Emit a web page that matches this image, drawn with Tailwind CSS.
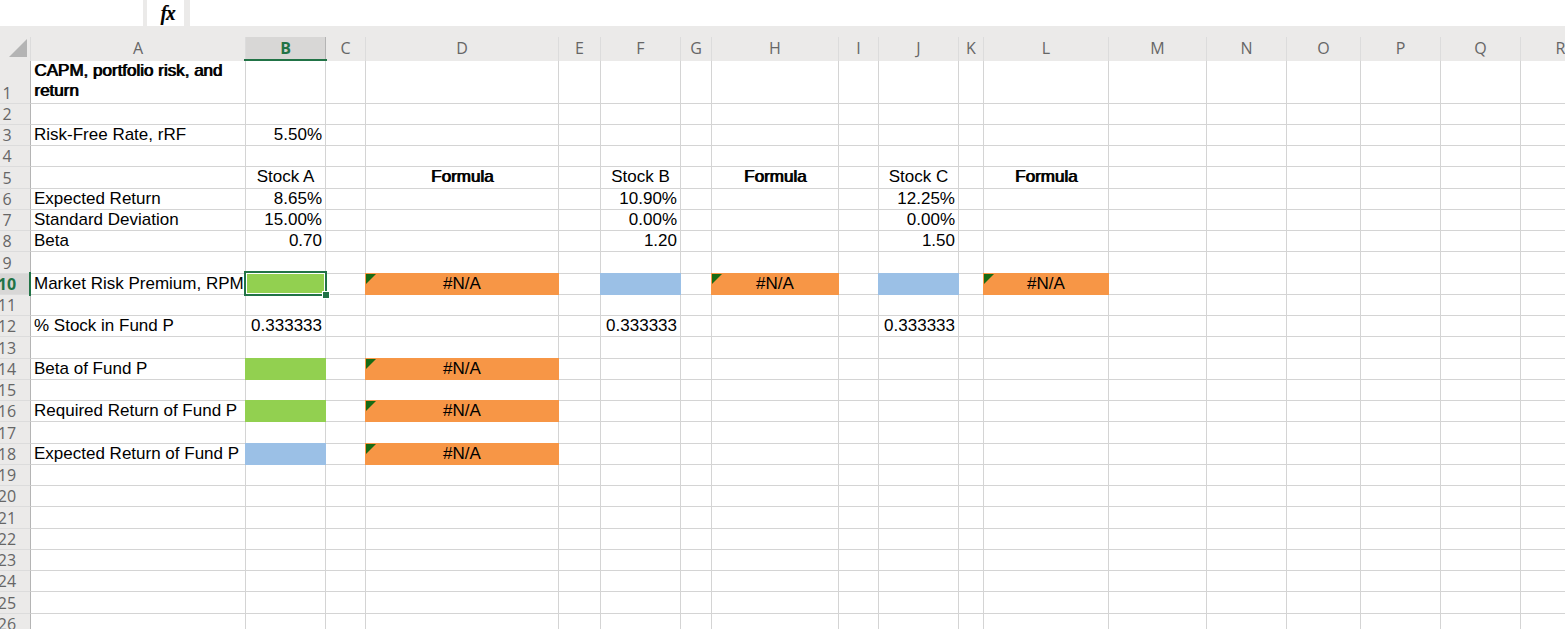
<!DOCTYPE html>
<html lang="en">

<head>
    <meta charset="UTF-8">
    <meta name="viewport" content="width=device-width, initial-scale=1.0">
    <title>CAPM, portfolio risk, and return</title>
    <script src="https://cdn.jsdelivr.net/npm/@tailwindcss/browser@4"></script>
</head>

<body class="bg-[#ebeae9] h-screen overflow-hidden flex flex-col">
    <!-- Formula bar -->
    <div class="flex shrink-0 h-[26px] mb-[11px]">
        <input type="text" aria-label="Name box" class="w-[143px] bg-white outline-none">
        <button type="button" aria-label="Insert function" class="w-[37px] ml-1 bg-white text-black text-xl leading-6 italic font-['Liberation_Serif',serif] pl-1 [text-shadow:1px_0_#000]">fx</button>
        <input type="text" aria-label="Formula bar" class="flex-1 ml-1.5 bg-white outline-none">
    </div>

    <!-- Sheet -->
    <div class="flex-1 min-h-0 overflow-hidden">
        <table class="table-fixed w-0 border-separate border-spacing-0 bg-white text-black text-[17px] leading-5 font-['Liberation_Sans',Arial,sans-serif]">
            <colgroup>
                <col class="w-[31px]">
                <col class="w-[215px]">
                <col class="w-[80px]">
                <col class="w-[40px]">
                <col class="w-[193px]">
                <col class="w-[42px]">
                <col class="w-[80px]">
                <col class="w-[31px]">
                <col class="w-[127px]">
                <col class="w-[40px]">
                <col class="w-[80px]">
                <col class="w-[25px]">
                <col class="w-[125px]">
                <col class="w-[98px]">
                <col class="w-[80px]">
                <col class="w-[74px]">
                <col class="w-[80px]">
                <col class="w-[80px]">
                <col class="w-[80px]">
            </colgroup>
            <thead>
                <tr id="letters" class="h-6 bg-[#ebeae9] text-base leading-5 text-[#666] font-['Open_Sans',sans-serif]">
                    <td class="p-0 align-top border-r border-[#dcdcdc]">
                        <svg class="ml-[9px] mt-0.5 block" width="18" height="18" viewBox="0 0 18 18"><path d="M18 0V18H0Z" fill="#b4b4b4" /></svg>
                    </td>
                </tr>
            </thead>
            <tbody id="rows"></tbody>
        </table>
    </div>

    <script>
        const columns = 'ABCDEFGHIJKLMNOPQR'.split('');
        const selected = { col: 'B', row: 10 };

        const cells = {
            A1: { text: 'CAPM, portfolio risk, and return', bold: true },
            A3: { text: 'Risk-Free Rate, rRF' },
            B3: { text: '5.50%', align: 'right' },
            B5: { text: 'Stock A', align: 'center' },
            D5: { text: 'Formula', align: 'center', bold: true },
            F5: { text: 'Stock B', align: 'center' },
            H5: { text: 'Formula', align: 'center', bold: true },
            J5: { text: 'Stock C', align: 'center' },
            L5: { text: 'Formula', align: 'center', bold: true },
            A6: { text: 'Expected Return' },
            B6: { text: '8.65%', align: 'right' },
            F6: { text: '10.90%', align: 'right' },
            J6: { text: '12.25%', align: 'right' },
            A7: { text: 'Standard Deviation' },
            B7: { text: '15.00%', align: 'right' },
            F7: { text: '0.00%', align: 'right' },
            J7: { text: '0.00%', align: 'right' },
            A8: { text: 'Beta' },
            B8: { text: '0.70', align: 'right' },
            F8: { text: '1.20', align: 'right' },
            J8: { text: '1.50', align: 'right' },
            A10: { text: 'Market Risk Premium, RPM' },
            B10: { fill: 'green' },
            D10: { text: '#N/A', align: 'center', fill: 'orange', error: true },
            F10: { fill: 'blue' },
            H10: { text: '#N/A', align: 'center', fill: 'orange', error: true },
            J10: { fill: 'blue' },
            L10: { text: '#N/A', align: 'center', fill: 'orange', error: true },
            A12: { text: '% Stock in Fund P' },
            B12: { text: '0.333333', align: 'right' },
            F12: { text: '0.333333', align: 'right' },
            J12: { text: '0.333333', align: 'right' },
            A14: { text: 'Beta of Fund P' },
            B14: { fill: 'green' },
            D14: { text: '#N/A', align: 'center', fill: 'orange', error: true },
            A16: { text: 'Required Return of Fund P' },
            B16: { fill: 'green' },
            D16: { text: '#N/A', align: 'center', fill: 'orange', error: true },
            A18: { text: 'Expected Return of Fund P' },
            B18: { fill: 'blue' },
            D18: { text: '#N/A', align: 'center', fill: 'orange', error: true },
        };

        // the shadows cover the grid lines above and to the left of a filled cell
        const fills = {
            none: 'border-[#d4d4d4]',
            green: 'bg-[#92d050] border-[#92d050] shadow-[-1px_0_#92d050,0_-1px_#92d050,-1px_-1px_#92d050]',
            orange: 'bg-[#f79646] border-[#f79646] shadow-[-1px_0_#f79646,0_-1px_#f79646,-1px_-1px_#f79646]',
            blue: 'bg-[#9bc0e6] border-[#9bc0e6] shadow-[-1px_0_#9bc0e6,0_-1px_#9bc0e6,-1px_-1px_#9bc0e6]',
        };
        const aligns = { left: 'text-left', center: 'text-center', right: 'text-right' };

        const errorMark = '<svg class="absolute left-0 top-0" width="10" height="10" viewBox="0 0 10 10"><path d="M0 0H10L0 10Z" fill="#186b14"/></svg>';
        const selection = `
            <div class="absolute z-10 -left-0.5 -top-[3px] -right-0.5 -bottom-0.5 border-2 border-[#217346]"><div class="h-full border border-white"></div></div>
            <div class="absolute z-10 -right-[5px] -bottom-[5px] size-[8px] bg-[#217346] border border-white"></div>`;

        function letterCell(col) {
            if (col === selected.col) {
                return `<th scope="col" class="relative p-0 pt-px align-top font-bold text-[#217346] bg-[#d8d7d6] border-r border-[#b4b4b4]">${col}
                    <div class="absolute -left-0.5 -right-0.5 bottom-0 h-0.5 bg-[#217346]"></div></th>`;
            }
            return `<th scope="col" class="p-0 pt-px align-top font-normal border-r border-[#dcdcdc]">${col}</th>`;
        }

        function numberCell(row) {
            if (row === selected.row) {
                return `<th scope="row" class="relative p-0 pr-4 align-bottom text-base leading-5 font-bold text-[#217346] bg-[#d8d7d6] border-r border-b border-r-[#217346] border-b-[#dcdcdc] font-['Open_Sans',sans-serif]">
                    <div class="flex justify-center">${row}</div>
                    <div class="absolute -right-px -top-0.5 -bottom-0.5 w-0.5 bg-[#217346]"></div></th>`;
            }
            return `<th scope="row" class="p-0 pr-4 align-bottom text-base leading-5 font-normal text-[#666] bg-[#ebeae9] border-r border-b border-r-[#b4b4b4] border-b-[#dcdcdc] font-['Open_Sans',sans-serif]">
                <div class="flex justify-center">${row}</div></th>`;
        }

        function sheetCell(col, row) {
            const cell = cells[col + row] || {};
            const weight = cell.bold ? '[text-shadow:1px_0_#000]' : '';
            const wrap = row === 1 ? '' : 'whitespace-nowrap';
            return `<td class="relative p-0 px-[3px] align-top border-r border-b ${fills[cell.fill || 'none']} ${aligns[cell.align || 'left']} ${weight} ${wrap}">${cell.text || ''}${cell.error ? errorMark : ''}${col === selected.col && row === selected.row ? selection : ''}</td>`;
        }

        function rowHeight(row) {
            if (row === 1) return 'h-[43px]';
            return row % 4 === 1 ? 'h-[22px]' : 'h-[21px]';
        }

        document.getElementById('letters').insertAdjacentHTML('beforeend', columns.map(letterCell).join(''));

        let html = '';
        for (let row = 1; row <= 26; row++) {
            html += `<tr class="${rowHeight(row)}">${numberCell(row)}${columns.map(col => sheetCell(col, row)).join('')}</tr>`;
        }
        document.getElementById('rows').innerHTML = html;
    </script>
</body>

</html>
